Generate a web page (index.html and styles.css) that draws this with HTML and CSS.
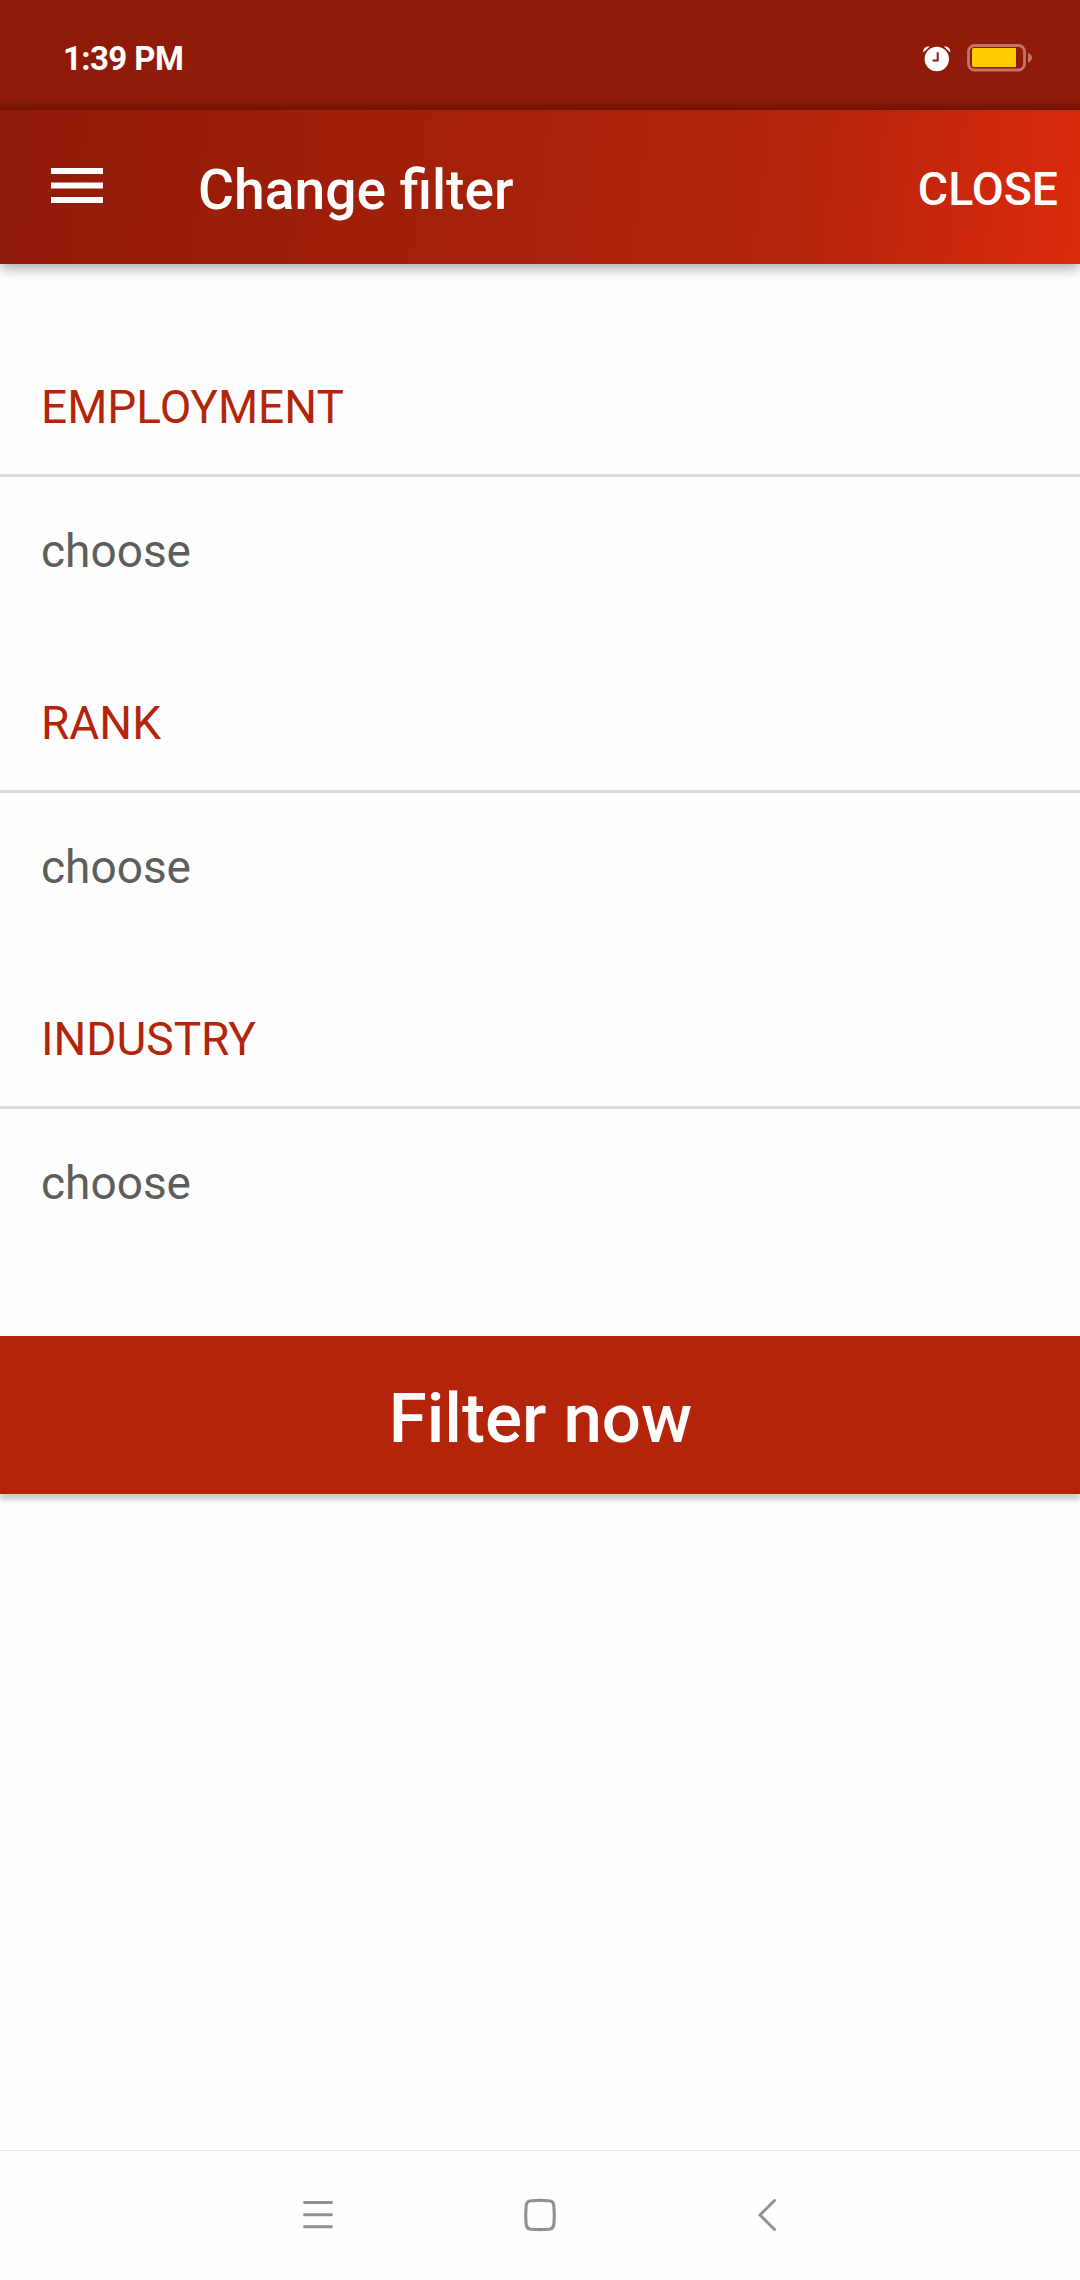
FILE: index.html
```html
<!DOCTYPE html>
<html lang="en">
<head>
<meta charset="utf-8">
<title>Change filter</title>
<link rel="stylesheet" href="styles.css">
</head>
<body>
<div class="screen">
  <div class="status">
    <span class="time">1:39 PM</span>
    <svg class="alarm" width="30" height="28" viewBox="0 0 30 28">
      <circle cx="14.8" cy="15" r="12.2" fill="#fff"/>
      <path d="M1.2 8.5C1 4 4 1.600 7.800 2.600ZM28.400 8.500C28.600 4 25.600 1.600 21.800 2.600Z" fill="#fff"/>
      <path d="M15.700 8.300V16.600H10.600" fill="none" stroke="#901b09" stroke-width="2"/>
    </svg>
    <svg class="battery" width="66" height="28" viewBox="0 0 66 28">
      <rect x="1.500" y="1.500" width="56" height="24.500" rx="6" fill="none" stroke="#c17468" stroke-width="2.800"/>
      <path d="M7 4H49V23H7Q5 23 5 21V6Q5 4 7 4Z" fill="#fc0"/>
      <path d="M61 9Q65 10.500 65 13.700T61 18.500Z" fill="#c17468"/>
    </svg>
  </div>
  <header class="toolbar">
    <svg class="menu" width="52" height="36" viewBox="0 0 52 36">
      <path d="M0 3.900H52M0 18.400H52M0 32.900H52" stroke="#fff" stroke-width="6"/>
    </svg>
    <h1 class="title">Change filter</h1>
    <span class="close">CLOSE</span>
  </header>
  <main class="content">
    <section class="group">
      <h2 class="label">EMPLOYMENT</h2>
      <div class="value">choose</div>
    </section>
    <section class="group">
      <h2 class="label">RANK</h2>
      <div class="value">choose</div>
    </section>
    <section class="group">
      <h2 class="label">INDUSTRY</h2>
      <div class="value">choose</div>
    </section>
    <button class="submit">Filter now</button>
  </main>
  <nav class="navbar">
    <svg width="34" height="34" viewBox="0 0 34 34">
      <path d="M3.500 4.500H30.500M3.500 16.700H30.500M3.500 28.700H30.500" stroke="#919191" stroke-width="2.900" stroke-linecap="round"/>
    </svg>
    <svg width="34" height="34" viewBox="0 0 34 34">
      <path d="M8 2.800Q17 1.900 26 2.800Q30.500 3.100 30.900 8Q31.700 17 30.900 26Q30.500 30.900 26 31.200Q17 32.100 8 31.200Q3.500 30.900 3.100 26Q2.300 17 3.100 8Q3.500 3.100 8 2.800Z" fill="none" stroke="#919191" stroke-width="3.100"/>
    </svg>
    <svg width="34" height="34" viewBox="0 0 34 34">
      <path d="M29.500 2.500L15 17L29.500 31.500" fill="none" stroke="#919191" stroke-width="2.900" stroke-linecap="round"/>
    </svg>
  </nav>
</div>
</body>
</html>
```
FILE: styles.css
```css
* { box-sizing: border-box; }
body { margin: 0; background: #fefefe; font-family: Roboto, sans-serif; }
.screen { width: 1080px; height: 2280px; display: flex; flex-direction: column; }
.status {
  height: 110px;
  padding: 5px 47px 0 63px;
  display: flex;
  align-items: center;
  background: linear-gradient(#901b09 98px, #741405 110px);
}
.time {
  margin-right: auto;
  padding-top: 2px;
  color: #fff;
  font-size: 33px;
  font-weight: 700;
  line-height: 40px;
  letter-spacing: -.6px;
}
.alarm { margin-right: 15px; }
.toolbar {
  height: 154px;
  padding: 0 22px 0 51px;
  display: flex;
  align-items: center;
  color: #fff;
  background: linear-gradient(97deg, #901b09 0%, #b3240b 74%, #dc2a0d 100%);
  box-shadow: 0 6px 12px -1px rgba(0, 0, 0, .32);
}
.menu { margin: -4px 95px 0 0; }
.title { margin: 6px auto 0 0; font-size: 55.2px; font-weight: 500; line-height: 64px; }
.close { padding-top: 4px; font-size: 46.4px; font-weight: 500; line-height: 56px; }
.content { flex: 1; padding-top: 72px; }
.group { height: 316px; }
.label {
  margin: 0;
  height: 141px;
  padding: 43px 41px 0;
  border-bottom: 3px solid #dcdcdc;
  color: #b3240b;
  font-size: 46px;
  font-weight: 400;
  line-height: 56px;
}
.value { padding: 46px 41px 0; color: #5d5d5d; font-size: 46px; line-height: 56px; }
.submit {
  display: block;
  width: 100%;
  height: 158px;
  margin-top: 52px;
  padding: 8px 0 0 1px;
  border: 0;
  background: #b3240b;
  color: #fff;
  font: 500 69px/80px Roboto, sans-serif;
  box-shadow: 0 6px 5px rgba(0, 0, 0, .2);
}
.navbar {
  height: 130px;
  padding: 0 301px 2px;
  display: flex;
  align-items: center;
  justify-content: space-between;
  border-top: 1px solid #e4e4e4;
}
```
